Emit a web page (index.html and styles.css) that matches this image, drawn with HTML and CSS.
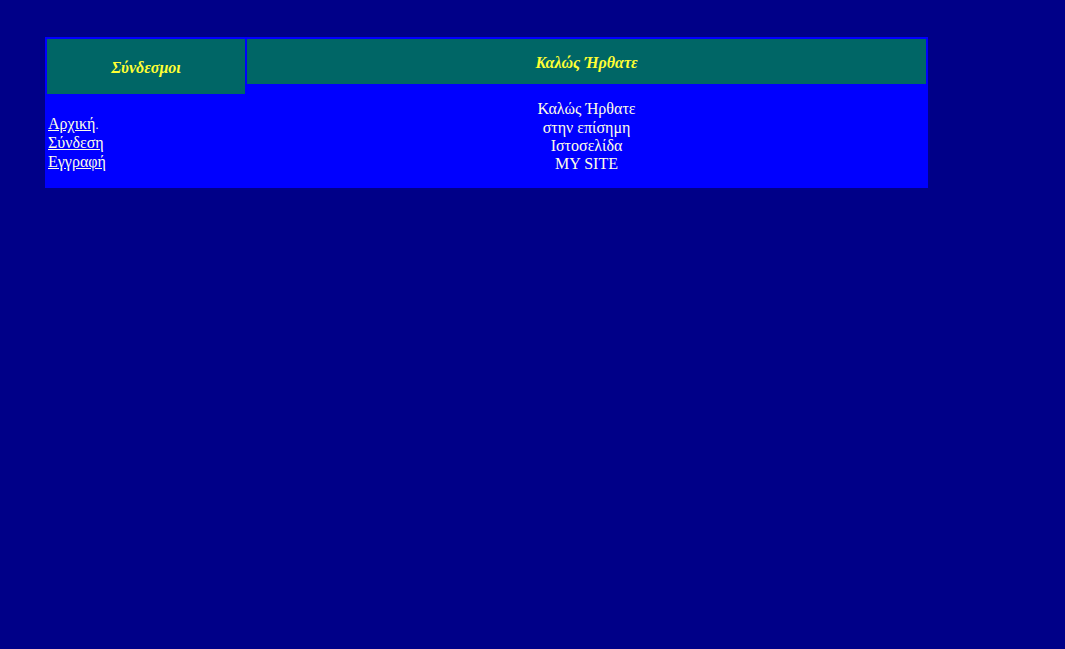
FILE: index.html
```html
<!DOCTYPE html>
<html lang="el">
<head>
<meta charset="utf-8">
<title>MY SITE</title>
<link rel="stylesheet" href="styles.css">
</head>
<body>
<div class="frame">
  <div class="col col-left">
    <div class="head head-left">Σύνδεσμοι</div>
    <div class="body body-left">
      <a class="link" href="#">Αρχική</a><span class="dot">.</span><br>
      <a class="link" href="#">Σύνδεση</a><br>
      <a class="link" href="#">Εγγραφή</a>
    </div>
  </div>
  <div class="col col-right">
    <div class="head head-right">Καλώς Ήρθατε</div>
    <div class="body body-right">
      Καλώς Ήρθατε<br>
      στην επίσημη<br>
      Ιστοσελίδα<br>
      MY SITE
    </div>
  </div>
</div>
</body>
</html>
```

FILE: styles.css
```css
html, body {
  margin: 0;
  padding: 0;
}
body {
  background: #000088;
  font-family: "Liberation Serif", "Times New Roman", serif;
  font-size: 16px;
  line-height: 18.4px;
  color: #ffffe8;
  padding: 37px 0 0 45px;
}
.frame {
  display: flex;
  gap: 2px;
  width: 879px;
  height: 147px;
  padding: 2px;
  background: #0000ff;
}
.col {
  display: flex;
  flex-direction: column;
}
.col-left {
  width: 198px;
}
.col-right {
  flex: 1;
}
.head {
  background: #006666;
  color: #ffff33;
  font-weight: bold;
  font-style: italic;
  display: flex;
  align-items: center;
  justify-content: center;
  padding-top: 3px;
  box-sizing: border-box;
}
.head-left {
  height: 55px;
}
.head-right {
  height: 45px;
}
.body {
  flex: 1;
  display: flex;
  flex-direction: column;
  justify-content: center;
}
.body-left {
  display: block;
  padding: 21px 0 0 1px;
}
.body-right {
  text-align: center;
  align-items: center;
  padding-top: 4px;
}
.link {
  color: #ffffe8;
  text-decoration: underline;
}
.dot {
  font-size: 12px;
}
```
